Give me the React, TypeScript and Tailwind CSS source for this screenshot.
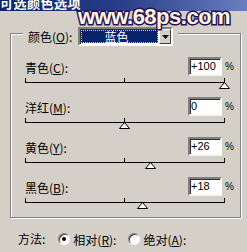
import React from "react";

const CJK = "[font-family:'Noto_Sans_CJK_SC','Liberation_Sans',sans-serif]";

function Label({ text, k }: { text: string; k: string }) {
  return (
    <span className={`${CJK} text-[12px] leading-none text-black whitespace-nowrap`}>
      {text}(<span className="underline">{k}</span>):
    </span>
  );
}

function Slider({ value }: { value: number }) {
  const center = 99 + value;
  return (
    <div className="relative h-[21px] w-[200px]">
      <div className="absolute left-0 top-[6px] h-px w-[200px] bg-black" />
      <div className="absolute left-0 top-[2px] h-[4px] w-px bg-black" />
      <div className="absolute left-[99px] top-[2px] h-[4px] w-px bg-black" />
      <div className="absolute left-[199px] top-[2px] h-[4px] w-px bg-black" />
      <svg
        className="absolute top-[6px]"
        style={{ left: center - 5 }}
        width="11"
        height="8"
        viewBox="0 0 11 8"
      >
        <polygon points="5.5,0.5 10.5,6.5 0.5,6.5" fill="#ffffff" stroke="#000" strokeWidth="1" />
      </svg>
    </div>
  );
}

function Row({ label, k, value }: { label: string; k: string; value: number }) {
  const txt = value > 0 ? `+${value}` : `${value}`;
  return (
    <div className="flex h-[40px] flex-col">
      <div className="flex h-[19px] items-center">
        <div className="w-[163px]">
          <Label text={label} k={k} />
        </div>
        <div className="flex h-[19px] w-[34px] items-center border-2 border-t-[#808080] border-l-[#808080] border-r-white border-b-[#f4f3f0] bg-white pl-[1px] shadow-[inset_1px_1px_0_#303030]">
          <span className="[font-family:'Liberation_Sans',Arial,sans-serif] text-[11px] leading-none text-black">{txt}</span>
        </div>
        <span className="ml-[3px] [font-family:'Liberation_Sans',Arial,sans-serif] text-[10px] leading-none text-black">%</span>
      </div>
      <Slider value={value} />
    </div>
  );
}

function Radio({ checked }: { checked: boolean }) {
  return (
    <div className="flex h-[12px] w-[12px] items-center justify-center rounded-full border border-t-[#808080] border-l-[#808080] border-r-white border-b-white bg-white shadow-[inset_1px_1px_0_#404040]">
      {checked && <div className="h-[4px] w-[4px] rounded-full bg-black" />}
    </div>
  );
}

export default function App() {
  return (
    <div className="relative h-[252px] w-[247px] overflow-hidden bg-[#d4d0c8]">
      <div className="h-[11px] overflow-hidden bg-gradient-to-r from-[#0a246a] via-[#2a3f8a] to-[#6a7ec0]">
        <div className={`${CJK} -mt-[4px] text-[13px] font-bold leading-[13px] tracking-[0.5px] text-white`}>
          可选颜色选项
        </div>
      </div>

      <div className="ml-[10px] mt-[22px] flex h-[185px] w-[231px] flex-col border border-[#808080] shadow-[inset_1px_1px_0_#ffffff,1px_1px_0_#ffffff]">
        <div className="-mt-[7px] ml-[12px] flex items-center gap-[3px] self-start bg-[#d4d0c8] px-[5px]">
          <Label text="颜色" k="O" />
          <div className="ml-[3px] flex h-[19px] w-[95px] border-2 border-t-[#808080] border-l-[#808080] border-r-white border-b-white bg-white shadow-[inset_1px_1px_0_#303030]">
            <div className="m-[1px] flex flex-1 items-center border border-dotted border-[#c8c8c8] bg-[#0a246a] pl-[22px]">
              <span className={`${CJK} text-[12px] leading-none text-white`}>蓝色</span>
            </div>
            <div className="flex w-[12px] items-center justify-center border border-t-white border-l-white border-r-[#404040] border-b-[#404040] bg-[#d4d0c8]">
              <svg width="7" height="4" viewBox="0 0 7 4">
                <polygon points="0,0 7,0 3.5,4" fill="#000" />
              </svg>
            </div>
          </div>
        </div>
        <div className="ml-[14px] mt-[11px] flex flex-col">
          <Row label="青色" k="C" value={100} />
          <Row label="洋红" k="M" value={0} />
          <Row label="黄色" k="Y" value={26} />
          <Row label="黑色" k="B" value={18} />
        </div>
      </div>

      <div className="ml-[18px] mt-[13px] flex h-[16px] items-center">
        <span className={`${CJK} text-[12px] leading-none text-black`}>方法:</span>
        <div className="ml-[13px]">
          <Radio checked />
        </div>
        <span className="ml-[3px]">
          <Label text="相对" k="R" />
        </span>
        <div className="ml-[12px]">
          <Radio checked={false} />
        </div>
        <span className="ml-[3px]">
          <Label text="绝对" k="A" />
        </span>
      </div>

      <div className="absolute left-[78px] top-[6px] [font-family:'Liberation_Sans',Arial,sans-serif] text-[22px] font-bold leading-[22px] tracking-[-0.5px] text-[#fff8e0] [paint-order:stroke_fill] [-webkit-text-stroke:3px_#2a1058]">
        www.68ps.com
      </div>
    </div>
  );
}
